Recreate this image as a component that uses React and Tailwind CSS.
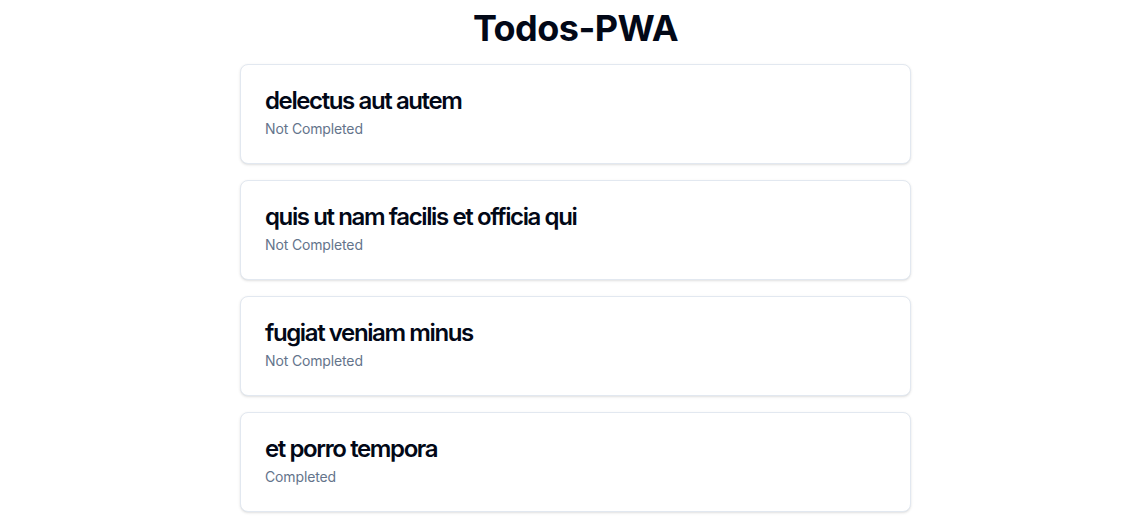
const TODOS = [
  { id: 1, title: "delectus aut autem", completed: false },
  { id: 2, title: "quis ut nam facilis et officia qui", completed: false },
  { id: 3, title: "fugiat veniam minus", completed: false },
  { id: 4, title: "et porro tempora", completed: true },
];

function TodoCard({ todo }) {
  return (
    <div className="rounded-lg border border-[#e2e8f0] bg-white text-[#020817] shadow-sm">
      <div className="flex flex-col gap-1.5 p-6">
        <h3 className="text-2xl font-semibold leading-none tracking-[-0.058em]">
          {todo.title}
        </h3>
        <p className="text-sm tracking-[-0.01em] text-[#64748b]">
          {todo.completed ? "Completed" : "Not Completed"}
        </p>
      </div>
    </div>
  );
}

export default function App() {
  return (
    <div
      className="min-h-screen bg-white pl-4 pt-2"
      style={{ fontFamily: "Inter, 'Noto Sans', sans-serif" }}
    >
      <div className="flex flex-col items-center">
        <h1 className="mb-4 text-4xl font-bold tracking-[-0.015em] text-[#020817]">
          Todos-PWA
        </h1>
        <div className="flex w-[671px] flex-col gap-4">
          {TODOS.map((todo) => (
            <TodoCard key={todo.id} todo={todo} />
          ))}
        </div>
      </div>
    </div>
  );
}
